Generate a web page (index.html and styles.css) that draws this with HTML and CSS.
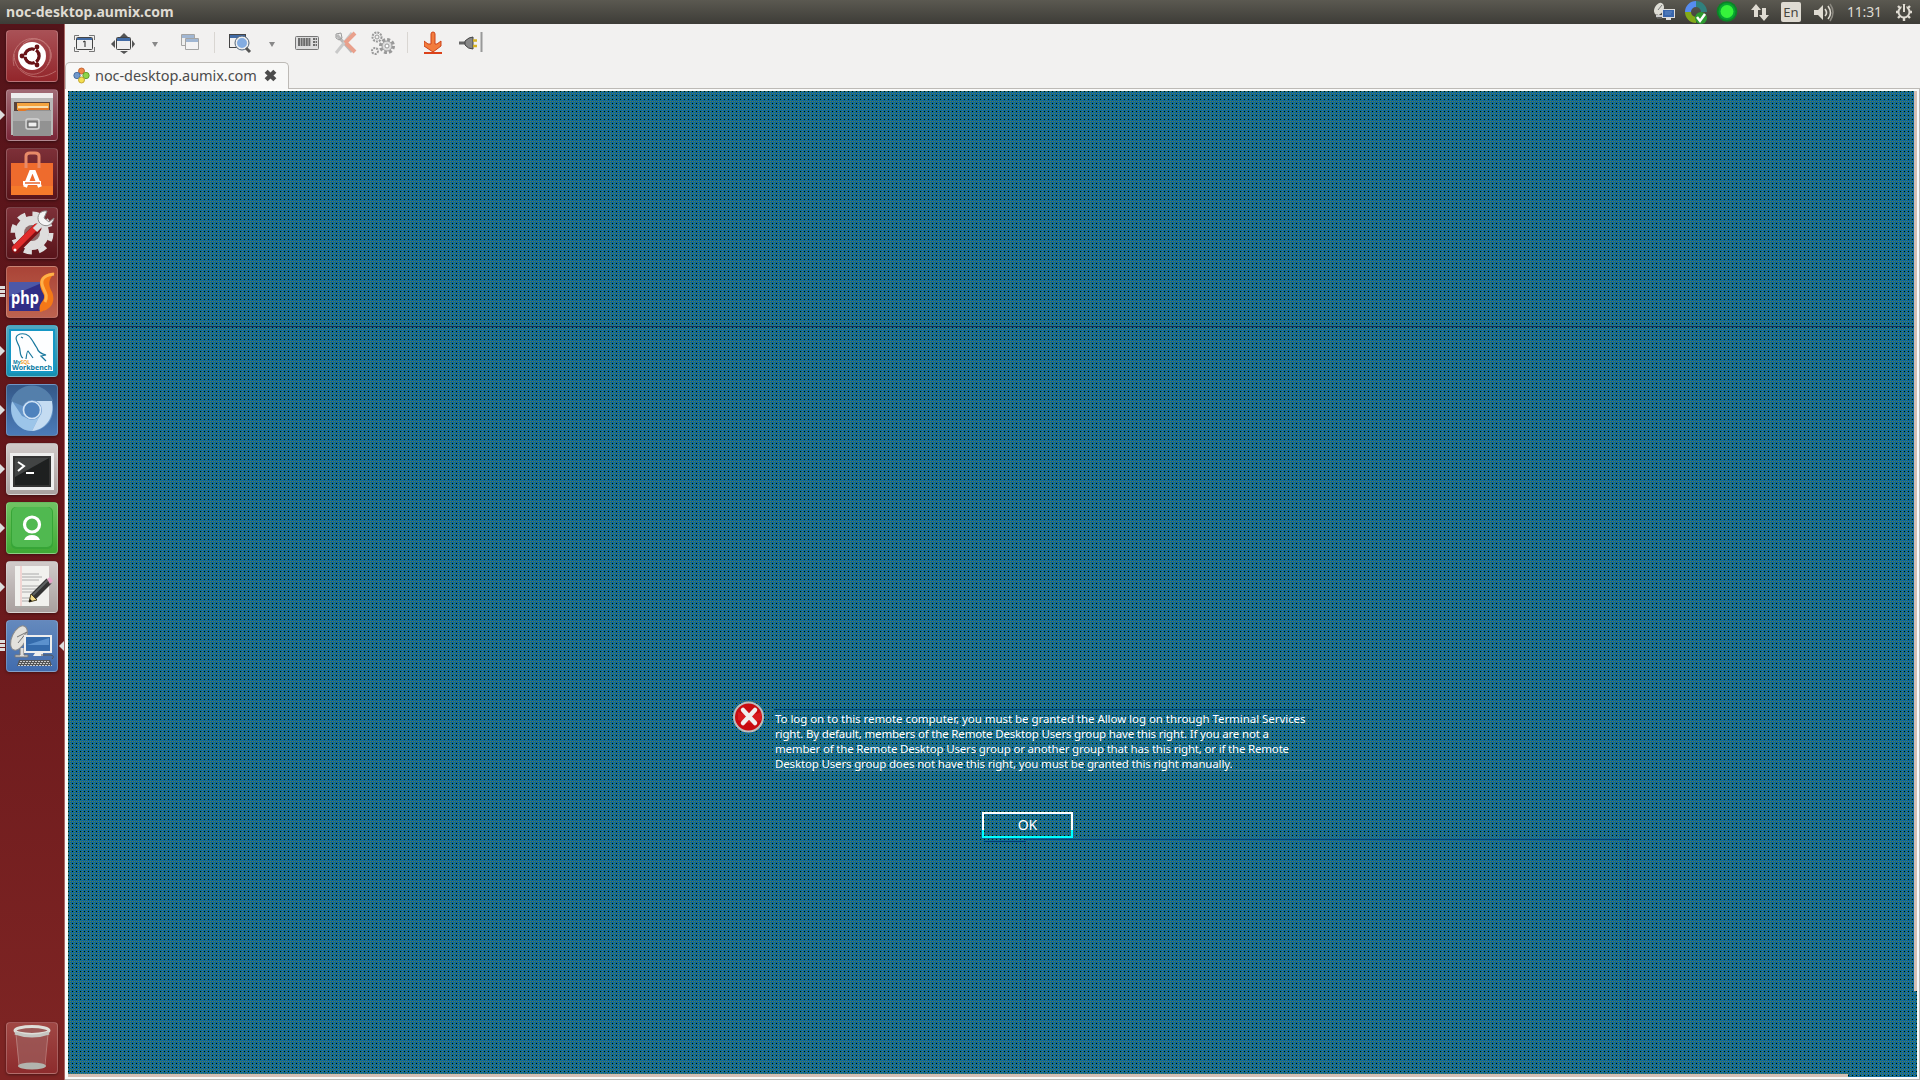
FILE: index.html
```html
<!DOCTYPE html>
<html lang="en"><head><meta charset="utf-8"><title>noc-desktop.aumix.com</title><link rel="stylesheet" href="styles.css"></head>
<body>
<header class="panel">
<span class="title">noc-desktop.aumix.com</span>
<div class="tray">
<svg class="t-remote" width="24" height="24" viewBox="0 0 24 24"><ellipse cx="7" cy="9" rx="4.500" ry="6.500" transform="rotate(28 7 9)" fill="#deddd5"/><path d="M6 10l4-5M5 14v4h5" stroke="#777" fill="none"/><path d="M4 15h6v2H4z" fill="#ccc"/><rect x="10.500" y="9.500" width="12" height="8" fill="#3966ac" stroke="#ddd"/><path d="M13 12h7M13 14h6" stroke="#5f88c6"/><path d="M14 18h5v2h-5z" fill="#ddd"/></svg>
<svg class="t-ring" width="24" height="24" viewBox="0 0 24 24"><g fill="none" stroke-width="6"><path d="M4 12a8 8 0 0 1 8-8" stroke="#568cf0"/><path d="M12 4a8 8 0 0 1 8 8" stroke="#30807d"/><path d="M4 12a8 8 0 0 0 8 8" stroke="#83aa18"/></g><circle cx="17" cy="18" r="6" fill="#2d9b31"/><path d="M13 17l3 4 5-7" stroke="#fff" stroke-width="2.500" fill="none"/></svg>
<svg class="t-green" width="22" height="24" viewBox="0 0 22 24"><circle cx="11" cy="11.500" r="10.300" fill="#0b8425"/><circle cx="11" cy="11.500" r="8.500" fill="#08a432"/><circle cx="11" cy="11.500" r="6.500" fill="#36f43b"/></svg>
<svg class="t-net" width="20" height="24" viewBox="0 0 20 24"><path d="M6 4l5 6H8v7H4v-7H1zM14 21l5-6h-3V8h-4v7H9z" fill="#dfdbd2"/></svg>
<span class="lang">En</span>
<svg class="t-sound" width="22" height="24" viewBox="0 0 22 24"><path d="M1 10h4l5-5v15l-5-5H1z" fill="#dfdbd2"/><path d="M12 9q3 4 0 7M15 6q5 7 0 13" fill="none" stroke="#dfdbd2" stroke-width="1.600"/><path d="M17 4q6 8 0 17" fill="none" stroke="#8a877f" stroke-width="1.600"/></svg>
<span class="clock">11:31</span>
<svg class="t-gear" width="18" height="24" viewBox="0 0 18 24"><circle cx="9" cy="12" r="5.500" fill="none" stroke="#dfdbd2" stroke-width="2"/><g stroke="#dfdbd2" stroke-width="2.400"><path d="M9 4v2M9 18v3M1 12h3M14 12h3M3 6l2 2M13 8l2-2M3 18l2-2M13 16l2 2"/></g><path d="M9 5v7" stroke="#4a4841" stroke-width="5"/><path d="M9 4v8" stroke="#dfdbd2" stroke-width="2"/></svg>
</div>
</header>
<div class="desktop">
<nav class="launcher">
<div class="tile dash"><svg viewBox="0 0 52 52"><g fill="none" stroke="#d89a96" opacity=".55"><path d="M8 36C2 12 30-2 43 18c4 7 2 13-2 17"/><path d="M17 14C32 0 53 18 42 35"/><path d="M43 17c7 22-16 36-29 21"/><path d="M8 24c0 20 22 30 42 17"/></g><circle cx="26" cy="26" r="14" fill="#fff"/><circle cx="26" cy="26" r="7" fill="none" stroke="#681216" stroke-width="3.500"/><path d="M26 26l5-9M26 26H15M26 26l5 9" stroke="#fff" stroke-width="1.500"/><circle cx="26" cy="26" r="5.400" fill="#fff"/><g fill="#681216"><circle cx="16" cy="26" r="2.400"/><circle cx="31" cy="17" r="2.400"/><circle cx="31" cy="35" r="2.400"/></g></svg></div>
<div class="tile files"><i class="run"></i><svg viewBox="0 0 52 52"><path d="M5 4h42v42H5z" fill="#b9b9b8"/><path d="M5 4h42v5H5z" fill="#eee"/><path d="M8 13h36v11H8z" fill="#59443b"/><path d="M11 14h32v7H11z" fill="#f3a33f"/><path d="M12 17h30v2H12z" fill="#f9dfb0"/><path d="M12 20h9l2-1h20v5H12z" fill="#e57824"/><path d="M7 22h12l2-1h24v26H7z" fill="#929292"/><path d="M7 22h38v10H7z" fill="#aaa"/><rect x="20" y="30" width="13" height="10" rx="2" fill="#999" stroke="#d5d5d5" stroke-width="1.500"/><rect x="22" y="33" width="9" height="5" fill="#eee" stroke="#555"/></svg></div>
<div class="tile shop"><svg viewBox="0 0 52 52"><path d="M5 15h42v32H5z" fill="#ee6b2d"/><path d="M5 38h42v9H5z" fill="#f57a2b"/><path d="M20 20V8q0-3 4-3h5q4 0 4 3v12" fill="none" stroke="#e88a68" stroke-width="3"/><path d="M19 39l6-15h3l6 15M17 35h18" fill="none" stroke="#fff" stroke-width="4"/><path d="M19 35h15" stroke="#e7652c" stroke-width="1.500"/></svg></div>
<div class="tile settings"><svg viewBox="0 0 52 52"><circle cx="26" cy="26" r="17" fill="#dedddd"/><circle cx="26" cy="26" r="19" fill="none" stroke="#dedddd" stroke-width="5" stroke-dasharray="8 6.900"/><circle cx="26" cy="26" r="8" fill="#8d6868"/><path d="M10 42l21-21" stroke="#7e1014" stroke-width="9" stroke-linecap="round"/><path d="M9 41l21-21" stroke="#df2c2b" stroke-width="6" stroke-linecap="round"/><path d="M29 23l8-8" stroke="#ddd" stroke-width="6"/><path d="M41 4c-7-1-11 5-8 11 6 7 14 3 15-4l-5 4-5-4z" fill="#f4f4f4" stroke="#888"/><circle cx="9" cy="43" r="1.500" fill="#fff"/></svg></div>
<div class="tile php"><i class="multi"></i><svg viewBox="0 0 52 52"><path d="M3 16h35v29H3z" fill="#302d86"/><path d="M3 16h35L3 31z" fill="#4d58a7"/><text x="5" y="38" class="phptxt" textLength="28" lengthAdjust="spacingAndGlyphs">php</text><path d="M49 7c-9 0-16 3-15 12 1 7 5 9 4 13-1 4-6 6-4 14 14-3 15-13 12-20-4-7-4-13 3-19z" fill="#f47817"/><path d="M48 8c-8 1-13 4-12 10 1 7 7 10 3 18" fill="none" stroke="#ffb14a" stroke-width="3"/></svg></div>
<div class="tile mysql"><i class="run"></i><svg viewBox="0 0 52 52"><path d="M4 5h44v42H4z" fill="#fdfeff" stroke="#1597c5" stroke-width="2"/><path d="M17 33c-4-2-2-8-4-12-3-6-5-10 1-12 10-2 12 7 17 14 1 4 5 6 9 7l-5 1 5 5M20 34q1-8 2-8l5 7M15 12l2 1" fill="none" stroke="#17779d" stroke-width="1.200"/><text x="7" y="39" class="mytiny">My<tspan fill="#efa136">SQL</tspan></text><text x="6" y="45" class="mytxt" textLength="40" lengthAdjust="spacingAndGlyphs">Workbench</text></svg></div>
<div class="tile chrome"><i class="run"></i><svg viewBox="0 0 52 52"><circle cx="26" cy="26" r="21" fill="#6595c8"/><path d="M26 26L5 17a22 22 0 0 1 42 0z" fill="#547fab"/><path d="M6 17c-4 14 5 30 20 30l9-18-9 7-10-4z" fill="#9cc5e9"/><path d="M26 17h20c3 17-7 29-20 30l9-18z" fill="#c4dcf2"/><circle cx="26" cy="26" r="10" fill="#6e9ccf"/><circle cx="26" cy="26" r="8.500" fill="#4e82bd" stroke="#d2e4f5" stroke-width="1.600"/></svg></div>
<div class="tile term"><i class="run"></i><svg viewBox="0 0 52 52"><path d="M4 10h44v37H4z" fill="#eee"/><path d="M7 13h38v31H7z" fill="#333"/><path d="M9 15h34v27H9z" fill="#1e2020"/><path d="M9 15h34L9 34z" fill="#424444"/><path d="M12 19l6 4-6 5M20 30h8" stroke="#fff" stroke-width="2" fill="none"/></svg></div>
<div class="tile green"><i class="run"></i><svg viewBox="0 0 52 52"><rect x="5" y="5" width="42" height="42" rx="5" fill="#37a537"/><rect x="6" y="5" width="40" height="40" rx="5" fill="#50b950"/><circle cx="26" cy="22.500" r="7.500" fill="none" stroke="#fff" stroke-width="3.200"/><path d="M18 38q2-5 8-5t8 5z" fill="#fff"/></svg></div>
<div class="tile edit"><i class="run"></i><svg viewBox="0 0 52 52"><path d="M10 6h33v41H10z" fill="#aaa8a5"/><path d="M9 5h34v40H9z" fill="#f1f1ee"/><path d="M15 5v40" stroke="#f1b9b8"/><path d="M16 13h17M16 16h20M16 19h17M16 25h18M16 28h20M16 31h14M16 37h12M16 40h7" stroke="#aaa"/><path d="M27 36l16-16" stroke="#333" stroke-width="7"/><path d="M27 34l15-15" stroke="#5e6262" stroke-width="2"/><path d="M23 41l2-8 6 6z" fill="#f3dc88" stroke="#473e20"/><path d="M41 18l3-2 3 4-3 3z" fill="#e4a3c6"/><path d="M23 41l3-1-2-2z"/></svg></div>
<div class="tile remmina"><i class="multi"></i><i class="active"></i><svg viewBox="0 0 52 52"><path d="M14 28v7H9v2h13v-2h-4v-7" fill="#ddd" stroke="#777"/><ellipse cx="13" cy="18" rx="7" ry="13" transform="rotate(25 13 18)" fill="#e2e1dc" stroke="#888"/><path d="M11 17l10-5M12 23l9-11" stroke="#777"/><rect x="19" y="16" width="26" height="16" fill="#346bac" stroke="#eee" stroke-width="2"/><path d="M21 25h22V18z" fill="#5b91cd"/><path d="M29 33h8v3H27z" fill="#eee"/><path d="M13 40h31l2 6H11z" fill="#555"/><path d="M14 41.500h29M13 43.500h31M12 45.500h34" stroke="#ccc" stroke-dasharray="2 1"/><path d="M35 35h10q4 1 1 4" fill="none" stroke="#555"/></svg></div>
<div class="tile trash"><svg viewBox="0 0 52 52"><path d="M9 9l4 35q13 6 25 0l5-35z" fill="#9c5957" opacity=".8"/><path d="M10 12l3 31M42 12l-3 31" stroke="#c38c89" opacity=".7"/><ellipse cx="26" cy="44" rx="14" ry="3.500" fill="#b2b4ae"/><ellipse cx="26" cy="8.500" rx="17" ry="4" fill="#9b5957" stroke="#deded9" stroke-width="3"/><path d="M9 11q17 6 34 0" fill="none" stroke="#c5c5c1" stroke-width="3"/></svg></div>
</nav>
<main class="window">
<div class="toolbar">
<svg class="tools" width="359" height="37" viewBox="0 0 359 37" fill="none">
<g stroke="#777"><path d="M8.500 15v-4.500H13M23 10.500h5.500V15M28.500 22v4.500H23M13 26.500H8.500V22"/><rect x="10.500" y="12.500" width="16" height="12" rx="1" fill="#eee" stroke="#444"/></g><path d="M11 13h15v2H11z" fill="#426ba5"/><path d="M17 17l2-1v6" stroke="#222"/>
<rect x="50.500" y="12.500" width="14" height="12" rx="1" fill="#eee" stroke="#444"/><path d="M51 13h13v3H51z" fill="#426ba5"/><path d="M54 12l4-4 4 4zM54 26l4 3 4-3zM49 15l-4 4 4 4zM66 15l3 4-3 4z" fill="#555"/>
<path d="M86 17h6l-3 5zM203 17h6l-3 5z" fill="#888"/>
<g opacity=".55"><path d="M115.500 9.500h13v11h-13z" fill="#eee" stroke="#666"/><path d="M116 10h12v3h-12z" fill="#5e86bb"/><path d="M119.500 13.500h13v11h-13z" fill="#f6f6f6" stroke="#666"/><path d="M120 14h12v3h-12z" fill="#5e86bb"/></g>
<path d="M148.500 7v21M341.500 7v21" stroke="#d9d6d2"/>
<rect x="163.500" y="9.500" width="16" height="13" fill="#f2f1f0" stroke="#444"/><path d="M164 10h15v3h-15z" fill="#426ba5"/><circle cx="176" cy="18" r="6" fill="#83ace1" stroke="#eee" stroke-width="2"/><circle cx="176" cy="18" r="7" stroke="#526579"/><path d="M180 23l4 4" stroke="#555" stroke-width="3"/>
<rect x="229.500" y="11.500" width="23" height="13" rx="1" fill="#ddd" stroke="#777"/><path d="M232 14h13M232 16h13M232 18h13M232 20h13M247 14h4M247 17h4M247 20h4" stroke="#444" stroke-width="1.700" stroke-dasharray="2 .6"/>
<path d="M271 10l15 17" stroke="#b8b8b8" stroke-width="3"/><path d="M286 8L270 28" stroke="#c9c9c9" stroke-width="3"/><path d="M289 8l-10 10M280 18l9 9" stroke="#e9a08b" stroke-width="4"/><path d="M270 9l5-1 1 5-3 2-3-2z" stroke="#999"/>
<g stroke="#999"><circle cx="311" cy="12" r="4.500" stroke-width="2" stroke-dasharray="2 1"/><circle cx="311" cy="12" r="2"/><circle cx="321" cy="21" r="6.500" stroke-width="3" stroke-dasharray="3 2"/><circle cx="321" cy="21" r="5" fill="#ddd"/><circle cx="321" cy="21" r="2" fill="#fff"/><circle cx="309" cy="26" r="3" stroke-width="2" stroke-dasharray="2 1"/></g>
</svg>
<svg width="70" height="38" viewBox="0 0 70 38"><path d="M7 10q0-2 2-2t2 2v10h2l4-3v5l-8 6-9-6v-5l4 3h3z" fill="#f27c3d" stroke="#cd4318"/><path d="M0 28h18v2H0z" fill="#db421a"/><path d="M35 19h8" stroke="#666" stroke-width="3"/><path d="M41 17q4-4 8-4v12q-5 0-8-4z" fill="#888" stroke="#444"/><path d="M49 16.500h4M49 22h4" stroke="#d5b323" stroke-width="2.500"/><path d="M57.500 8v20" stroke="#999" stroke-width="2"/></svg>
</div>
<div class="tabs"><div class="tab"><svg width="17" height="17" viewBox="0 0 17 17"><g stroke-width=".8"><circle cx="8.500" cy="4" r="3" fill="#ee8a49" stroke="#ba5422"/><circle cx="4" cy="8.500" r="3.200" fill="#7198cb" stroke="#385f91"/><circle cx="13" cy="8.500" r="3.200" fill="#8fd449" stroke="#549223"/><circle cx="8.500" cy="13" r="3" fill="#f5df50" stroke="#b49620"/></g></svg><span>noc-desktop.aumix.com</span><svg class="close" width="13" height="13" viewBox="0 0 12 12"><path d="M2 2l8 8M10 2l-8 8" stroke="#4c4c4c" stroke-width="4"/></svg></div></div>
<div class="view"><div class="remote">
<div class="region"></div>
<div class="seam"></div><div class="frame"></div><div class="notch"></div><div class="stripe-r"></div><div class="stripe-b"></div>
<section class="dialog">
<div class="message"><svg width="32" height="32" viewBox="0 0 32 32"><circle cx="15.500" cy="16" r="14.500" fill="#c80b10" stroke="#bcbcbc" stroke-width="2"/><path d="M5 11q12 6 23 0v8q-12 6-23 0z" fill="#e32528" opacity=".6"/><path d="M10 9l12 13M22 9L10 22" stroke="#efefef" stroke-width="4.500" stroke-linecap="round"/></svg>
<p><span class="l1">To log on to this remote computer, you must be granted the Allow log on through Terminal Services</span><span class="l2">right. By default, members of the Remote Desktop Users group have this right. If you are not a</span><span class="l3">member of the Remote Desktop Users group or another group that has this right, or if the Remote</span><span class="l4">Desktop Users group does not have this right, you must be granted this right manually.</span></p></div>
<button>OK</button>
</section>
</div></div>
</main>
</div>
</body></html>
```
FILE: styles.css
```css
*{box-sizing:border-box}
body{margin:0;width:1920px;height:1080px;overflow:hidden;display:flex;flex-direction:column;background:#f2f1f0;font-family:"Noto Sans","Open Sans",sans-serif}
svg{display:block;flex:none}
.panel{height:24px;flex:none;background:linear-gradient(#5b5951,#3d3c37);display:flex;align-items:center;justify-content:space-between;padding:0 6px;color:#dfdbd2}
.title{font-size:14px;font-weight:700;line-height:24px;white-space:nowrap;letter-spacing:.03px}
.tray{display:flex;align-items:center;height:24px}
.t-remote{margin-right:8px}.t-ring{margin-right:8px}.t-green{margin-right:12px}.t-net{margin-right:11px}
.lang{width:20px;height:20px;border-radius:2px;background:#dfdbd2;color:#47463f;font-size:13px;line-height:20px;text-align:center}
.t-sound{margin-left:12px}
.clock{font-size:14px;line-height:24px;width:37px;margin:0 11px 0 12px;white-space:nowrap;letter-spacing:-.2px}
.t-gear{margin-right:1px}
.desktop{flex:1;display:flex;min-height:0}
.launcher{width:65px;flex:none;padding:6px 0 6px 6px;display:flex;flex-direction:column;gap:7px;background:linear-gradient(#54141a,#67171b 45%,#7d2423 95%);border-right:1px solid #a96865}
.tile{position:relative;width:52px;height:52px;flex:none;border-radius:4px;border:1px solid #ffffff35;background:linear-gradient(#92525a,#702432);box-shadow:0 1px 3px #0006}
.tile svg{width:52px;height:52px;margin:-1px}
.dash{background:linear-gradient(#a95156,#93262b)}.files{background:linear-gradient(#a06b75,#792537)}.shop,.settings{background:linear-gradient(#7d3038,#59141a)}
.php{background:linear-gradient(#aa4437,#bd624f)}.mysql{background:linear-gradient(#51a8c0,#168eaf)}.chrome{background:linear-gradient(#345888,#4b7bb8)}
.term,.edit{background:linear-gradient(#d0cac9,#a9a09f)}.green{background:linear-gradient(#70c463,#3faa35)}.remmina{background:linear-gradient(#6489bd,#416cae)}
.trash{margin-top:auto;background:linear-gradient(#a04744,#8d2c2d)}
.run{position:absolute;left:-7px;top:20px;border:5px solid transparent;border-left-color:#ddd;border-right:0}
.active{position:absolute;right:-7px;top:20px;border:5px solid transparent;border-right-color:#ddd;border-left:0}
.multi{position:absolute;left:-7px;top:19px;width:5px;height:11px;background:repeating-linear-gradient(#ddd 0 3px,transparent 3px 4px)}
.phptxt{font:700 18px "Noto Sans",sans-serif;fill:#fff}
.mytxt{font:700 7px "Noto Sans",sans-serif;fill:#087ca4}.mytiny{font:700 5px "Noto Sans",sans-serif;fill:#087ca4}
.window{flex:1;display:flex;flex-direction:column;min-width:0}
.toolbar{height:38px;display:flex;flex:none}
.tools{margin:1px -1px 0 1px}
.tabs{height:27px;flex:none;border-bottom:1px solid #bdbab6}
.tab{width:224px;height:27px;border:1px solid #bdbab6;border-bottom:0;border-radius:5px 5px 0 0;background:#f8f8f7;display:flex;align-items:center;color:#4c4c4c;font-size:14.5px;padding:0 0 1px 7px}
.tab span{margin:-1px 0 0 5px;width:161px;white-space:nowrap;letter-spacing:-.07px}.tab .close{margin-left:8px}
.view{flex:1;min-height:0;background:#fafaf9;padding:2px 2px 2px 3px;border-right:1px solid #bdbab6;border-bottom:1px solid #bdbab6}
.remote{position:relative;width:100%;height:100%;background:conic-gradient(#008080 25%,#1e50b4 0 50%,#008080 0 75%,transparent 0) 0 0/2px 2px,conic-gradient(#646464 75%,#000 0) 0 0/4px 4px;overflow:hidden}
.region{position:absolute;left:706px;top:618px;width:539px;height:62px;border-top:1px solid #07466a;border-bottom:1px solid #367ba8}
.seam{position:absolute;left:0;right:0;top:235px;height:1px;background:#06306c}
.frame{position:absolute;left:957px;top:748px;width:603px;height:235px;border:1px dotted #08506a;border-top:1px solid #08406a;border-bottom:0}
.notch{position:absolute;left:916px;top:750px;width:42px;height:1px;background:#08406a}
.stripe-r{position:absolute;right:0;top:0;width:3px;height:900px;background:#d4bfb4}
.stripe-b{position:absolute;left:0;bottom:0;height:3px;width:1780px;background:#d4bfb4}
.dialog{position:absolute;left:665px;top:610px;width:590px;display:flex;flex-direction:column}
.message{display:flex;gap:10px}
.message p{margin:10px 0 0;color:#fff;font-size:11.5px;line-height:15px;display:flex;flex-direction:column}
.message p span{height:15px;white-space:nowrap}
.l1{letter-spacing:-.05px}.l2{letter-spacing:-.17px}.l3{letter-spacing:-.185px}.l4{letter-spacing:-.157px}
.dialog button{margin:41px 0 0 249px;width:91px;height:26px;border:2px solid;border-image:linear-gradient(#fff 68%,#0ff 68%) 2;background:transparent;color:#fff;font:14px "Noto Sans",sans-serif;line-height:20px;padding:0}
```
